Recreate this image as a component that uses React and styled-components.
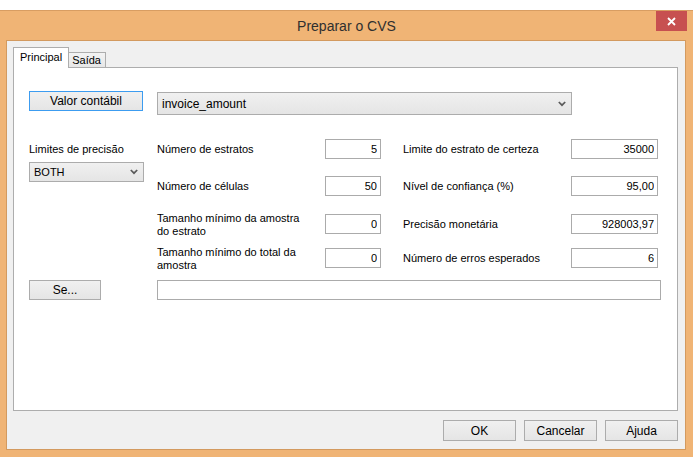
import React from 'react'
import styled, { createGlobalStyle } from 'styled-components'

const GlobalStyle = createGlobalStyle`
  html, body {
    margin: 0;
    padding: 0;
    background: #fff;
  }
  body {
    font-family: "Liberation Sans", Arial, sans-serif;
    font-size: 11px;
    color: #000;
  }
`

const Page = styled.div`
  padding-top: 10px;
  width: 693px;
  height: 457px;
  box-sizing: border-box;
  background: #fff;
`

const Window = styled.div`
  height: 447px;
  box-sizing: border-box;
  background: #f0b475;
  border-top: 1px solid #d89d62;
  display: flex;
  flex-direction: column;
`

const TitleBar = styled.div`
  height: 29px;
  display: grid;
  grid-template-columns: 1fr auto 1fr;
  align-items: center;
`

const Title = styled.div`
  grid-column: 2;
  font-size: 14px;
  color: #2f2f2f;
  padding-top: 1px;
`

const CloseButton = styled.div`
  grid-column: 3;
  justify-self: end;
  align-self: start;
  width: 31px;
  height: 20px;
  margin-right: 6px;
  background: #c75050;
  display: flex;
  align-items: center;
  justify-content: center;
`

const Client = styled.div`
  flex: 1;
  margin: 0 7px 7px 6px;
  background: #f0f0f0;
  border: 1px solid #d39a5f;
  padding: 7px 7px 0 6px;
  display: flex;
  flex-direction: column;
`

const TabRow = styled.div`
  display: flex;
  align-items: flex-end;
  height: 20px;
  margin-bottom: -1px;
  position: relative;
  z-index: 1;
`

const Tab = styled.div`
  box-sizing: border-box;
  height: ${(p) => (p.$active ? '21px' : '16px')};
  padding: ${(p) => (p.$active ? '3px 6px 0 6px' : '1px 4px 0 3px')};
  margin-left: ${(p) => (p.$active ? '0' : '-1px')};
  background: ${(p) => (p.$active ? '#fff' : 'linear-gradient(#f3f3f3, #e7e7e7)')};
  border: 1px solid #adadad;
  border-bottom: ${(p) => (p.$active ? 'none' : '1px solid #adadad')};
  font-size: 11px;
  color: #000;
`

const Panel = styled.div`
  height: 344px;
  box-sizing: border-box;
  background: #fff;
  border: 1px solid #adadad;
  padding: 23px 0 0 15px;
`

const TopRow = styled.div`
  display: flex;
  align-items: flex-start;
`

const Button = styled.div`
  box-sizing: border-box;
  width: ${(p) => p.$w || 73}px;
  height: ${(p) => p.$h || 20}px;
  display: flex;
  align-items: center;
  justify-content: center;
  background: linear-gradient(#f0f0f0, #e5e5e5);
  border: 1px solid ${(p) => (p.$focus ? '#3c9cf0' : '#acacac')};
  font-size: 12px;
  color: #000;
`

const Select = styled.div`
  box-sizing: border-box;
  width: ${(p) => p.$w}px;
  height: ${(p) => p.$h}px;
  margin-left: ${(p) => p.$ml || 0}px;
  margin-top: ${(p) => p.$mt || 0}px;
  display: flex;
  align-items: center;
  justify-content: space-between;
  padding: 0 5px 0 ${(p) => p.$pl || 4}px;
  background: linear-gradient(#f0f0f0, #e5e5e5);
  border: 1px solid #acacac;
  font-size: ${(p) => p.$fs || 11}px;
  color: #000;
`

const Body = styled.div`
  display: grid;
  grid-template-columns: 128px 168px 56px 190px 87px;
  grid-template-rows: 37px 38px 34px 20px;
  margin-top: 24px;
`

const LeftCol = styled.div`
  grid-column: 1;
  grid-row: 1 / span 4;
  display: flex;
  flex-direction: column;
  align-items: flex-start;
`

const Label = styled.div`
  height: 20px;
  display: flex;
  align-items: center;
  padding-left: ${(p) => p.$pl || 0}px;
  padding-top: 1px;
  box-sizing: border-box;
  line-height: 13px;
  font-size: 11px;
  color: #000;
  white-space: pre-line;
`

const NumField = styled.input`
  box-sizing: border-box;
  width: 100%;
  height: 20px;
  margin: 0;
  border: 1px solid #ababab;
  background: #fff;
  text-align: right;
  padding: 0 3px 0 2px;
  font-family: "Liberation Sans", Arial, sans-serif;
  font-size: 11px;
  color: #000;
  outline: none;
`

const SeRow = styled.div`
  display: flex;
  align-items: flex-start;
  margin-top: 12px;
`

const LongField = styled.input`
  box-sizing: border-box;
  width: 504px;
  height: 20px;
  margin: 0 0 0 56px;
  border: 1px solid #ababab;
  background: #fff;
  outline: none;
`

const Footer = styled.div`
  display: flex;
  justify-content: flex-end;
  gap: 8px;
  margin-top: 9px;
`

const Chevron = () => (
  <svg width="8" height="6" viewBox="0 0 8 6">
    <path d="M0.8 1 L4 4.2 L7.2 1" fill="none" stroke="#5a5a5a" strokeWidth="1.7" />
  </svg>
)

const CloseX = () => (
  <svg width="9" height="9" viewBox="0 0 9 9">
    <path d="M1 1 L8 8 M8 1 L1 8" stroke="#fff" strokeWidth="1.8" />
  </svg>
)

const rows = [
  { left: 'Número de estratos', lv: '5', right: 'Limite do estrato de certeza', rv: '35000' },
  { left: 'Número de células', lv: '50', right: 'Nível de confiança (%)', rv: '95,00' },
  { left: 'Tamanho mínimo da amostra\ndo estrato', lv: '0', right: 'Precisão monetária', rv: '928003,97' },
  { left: 'Tamanho mínimo do total da\namostra', lv: '0', right: 'Número de erros esperados', rv: '6' },
]

export default function App() {
  return (
    <Page>
      <GlobalStyle />
      <Window>
        <TitleBar>
          <Title>Preparar o CVS</Title>
          <CloseButton>
            <CloseX />
          </CloseButton>
        </TitleBar>
        <Client>
          <TabRow>
            <Tab $active>Principal</Tab>
            <Tab>Saída</Tab>
          </TabRow>
          <Panel>
            <TopRow>
              <Button $w={114} $focus>Valor contábil</Button>
              <Select $w={415} $h={23} $ml={14} $mt={1} $fs={12} $pl={4}>
                <span>invoice_amount</span>
                <Chevron />
              </Select>
            </TopRow>
            <Body>
              <LeftCol>
                <Label>Limites de precisão</Label>
                <Select $w={115} $h={20} $mt={3} $pl={4}>
                  <span>BOTH</span>
                  <Chevron />
                </Select>
              </LeftCol>
              {rows.map((r, i) => (
                <React.Fragment key={i}>
                  <Label style={{ gridColumn: 2, gridRow: i + 1 }}>{r.left}</Label>
                  <div style={{ gridColumn: 3, gridRow: i + 1 }}>
                    <NumField readOnly defaultValue={r.lv} />
                  </div>
                  <Label $pl={22} style={{ gridColumn: 4, gridRow: i + 1 }}>{r.right}</Label>
                  <div style={{ gridColumn: 5, gridRow: i + 1 }}>
                    <NumField readOnly defaultValue={r.rv} />
                  </div>
                </React.Fragment>
              ))}
            </Body>
            <SeRow>
              <Button $w={72}>Se...</Button>
              <LongField readOnly />
            </SeRow>
          </Panel>
          <Footer>
            <Button $h={21}>OK</Button>
            <Button $h={21}>Cancelar</Button>
            <Button $h={21}>Ajuda</Button>
          </Footer>
        </Client>
      </Window>
    </Page>
  )
}
